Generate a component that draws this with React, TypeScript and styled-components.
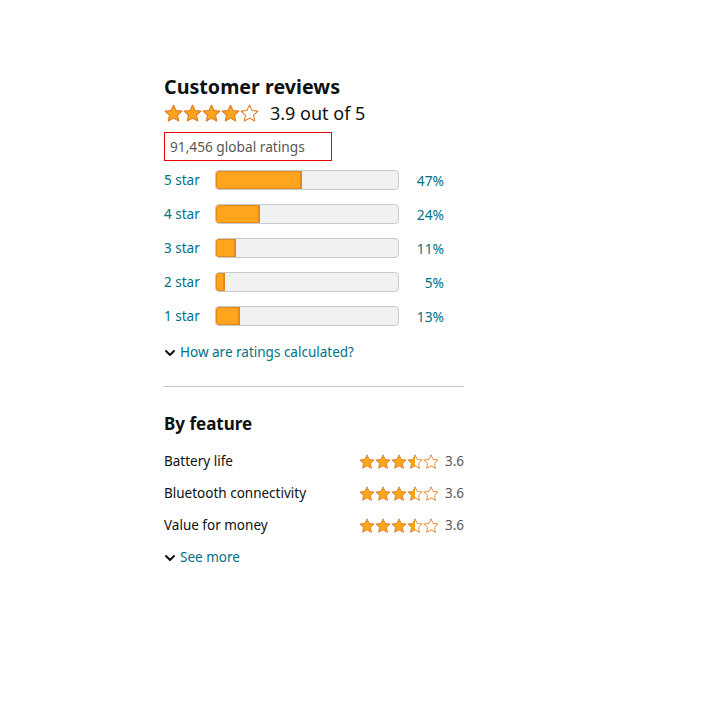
import React from "react";
import styled, { createGlobalStyle } from "styled-components";

const Global = createGlobalStyle`
  html, body { margin: 0; padding: 0; background: #fff; }
  body { font-family: "Noto Sans", "Open Sans", Arial, sans-serif; color: #0F1111; }
`;

const Page = styled.div`
  padding: 74px 0 0 164px;
`;

const Column = styled.div`
  width: 300px;
  display: flex;
  flex-direction: column;
`;

const Title = styled.h2`
  margin: 0;
  font-size: 19.7px;
  line-height: 26px;
  font-weight: 700;
  color: #0F1111;
`;

const AverageRow = styled.div`
  display: flex;
  align-items: center;
  gap: 11px;
  height: 26px;
`;

const AverageText = styled.span`
  font-size: 18px;
  line-height: 24px;
  color: #0F1111;
`;

const TotalBox = styled.div`
  margin-top: 6px;
  width: 168px;
  height: 29px;
  box-sizing: border-box;
  border: 1px solid #e00;
  padding: 4px 0 0 5px;
  font-size: 13.7px;
  line-height: 19px;
  color: #565959;
`;

const Histogram = styled.div`
  display: flex;
  flex-direction: column;
  gap: 14px;
  margin-top: 9px;
`;

const HistRow = styled.div`
  display: grid;
  grid-template-columns: 51px 184px 45px;
  align-items: center;
  height: 20px;
`;

const StarLink = styled.span`
  font-size: 13.5px;
  line-height: 19px;
  color: #007185;
`;

const Track = styled.div`
  height: 20px;
  box-sizing: border-box;
  border: 1px solid #C7CBCB;
  background: #F0F2F2;
  border-radius: 4px;
  overflow: hidden;
  display: flex;
`;

const Fill = styled.div`
  height: 100%;
  box-sizing: border-box;
  background: #FFA41C;
  border-right: 1px solid #E3851B;
  box-shadow: inset 0 0 0 1px #E8891A;
  border-radius: 3px 0 0 3px;
`;

const Pct = styled.span`
  font-size: 13.8px;
  line-height: 19px;
  color: #007185;
  text-align: right;
`;

const Expander = styled.div`
  display: flex;
  align-items: center;
  gap: 4px;
  font-size: 13.5px;
  line-height: 19px;
  color: #007185;
`;

const HowLink = styled(Expander)`
  margin-top: 17px;
`;

const Divider = styled.hr`
  margin: 24px 0 0;
  border: none;
  border-top: 1px solid #C4C6C6;
  width: 300px;
`;

const SubTitle = styled.h3`
  margin: 25px 0 0;
  font-size: 17px;
  line-height: 24px;
  font-weight: 700;
  color: #0F1111;
`;

const Features = styled.div`
  display: flex;
  flex-direction: column;
  gap: 13px;
  margin-top: 16px;
`;

const FeatureRow = styled.div`
  display: flex;
  align-items: center;
  justify-content: space-between;
  height: 19px;
`;

const FeatureName = styled.span`
  font-size: 13.5px;
  line-height: 19px;
  color: #0F1111;
`;

const FeatureScore = styled.div`
  display: flex;
  align-items: center;
  gap: 6px;
`;

const Score = styled.span`
  font-size: 13.5px;
  line-height: 19px;
  color: #565959;
`;

const SeeMore = styled(Expander)`
  margin-top: 13px;
`;

const StarsWrap = styled.div`
  display: flex;
  align-items: center;
`;

const STAR = "M12 1.4 L15.2 8.2 L22.6 9 L17.1 14.1 L18.6 21.5 L12 17.8 L5.4 21.5 L6.9 14.1 L1.4 9 L8.8 8.2 Z";

let uid = 0;
function Star({ fill, size }: { fill: number; size: number }) {
  const id = React.useMemo(() => `sg${uid++}`, []);
  return (
    <svg width={size} height={size} viewBox="0 0 24 24">
      <defs>
        <linearGradient id={id} x1="0" x2="1" y1="0" y2="0">
          <stop offset={fill} stopColor="#FFA41C" />
          <stop offset={fill} stopColor="#FFFFFF" />
        </linearGradient>
      </defs>
      <path d={STAR} fill={`url(#${id})`} stroke="#DE7921" strokeWidth="1.3" strokeLinejoin="round" />
    </svg>
  );
}

function Stars({ value, size }: { value: number; size: number }) {
  const fills = [0, 1, 2, 3, 4].map((i) => {
    const v = value - i;
    if (v >= 0.75) return 1;
    if (v >= 0.25) return 0.5;
    return 0;
  });
  return (
    <StarsWrap>
      {fills.map((f, i) => (
        <Star key={i} fill={f} size={size} />
      ))}
    </StarsWrap>
  );
}

function Chevron() {
  return (
    <svg width="12" height="12" viewBox="0 0 12 12">
      <path d="M2 4 L6 8 L10 4" fill="none" stroke="#0F1111" strokeWidth="2" strokeLinecap="round" strokeLinejoin="round" />
    </svg>
  );
}

const bars = [
  { label: "5 star", pct: 47 },
  { label: "4 star", pct: 24 },
  { label: "3 star", pct: 11 },
  { label: "2 star", pct: 5 },
  { label: "1 star", pct: 13 },
];

const features = [
  { name: "Battery life", score: 3.6 },
  { name: "Bluetooth connectivity", score: 3.6 },
  { name: "Value for money", score: 3.6 },
];

export default function App() {
  return (
    <>
      <Global />
      <Page>
        <Column>
          <Title>Customer reviews</Title>
          <AverageRow>
            <Stars value={4} size={19} />
            <AverageText>3.9 out of 5</AverageText>
          </AverageRow>
          <TotalBox>91,456 global ratings</TotalBox>
          <Histogram>
            {bars.map((b) => (
              <HistRow key={b.label}>
                <StarLink>{b.label}</StarLink>
                <Track>
                  <Fill style={{ width: `${b.pct}%` }} />
                </Track>
                <Pct>{b.pct}%</Pct>
              </HistRow>
            ))}
          </Histogram>
          <HowLink>
            <Chevron />
            How are ratings calculated?
          </HowLink>
          <Divider />
          <SubTitle>By feature</SubTitle>
          <Features>
            {features.map((f) => (
              <FeatureRow key={f.name}>
                <FeatureName>{f.name}</FeatureName>
                <FeatureScore>
                  <Stars value={f.score} size={16} />
                  <Score>{f.score}</Score>
                </FeatureScore>
              </FeatureRow>
            ))}
          </Features>
          <SeeMore>
            <Chevron />
            See more
          </SeeMore>
        </Column>
      </Page>
    </>
  );
}
